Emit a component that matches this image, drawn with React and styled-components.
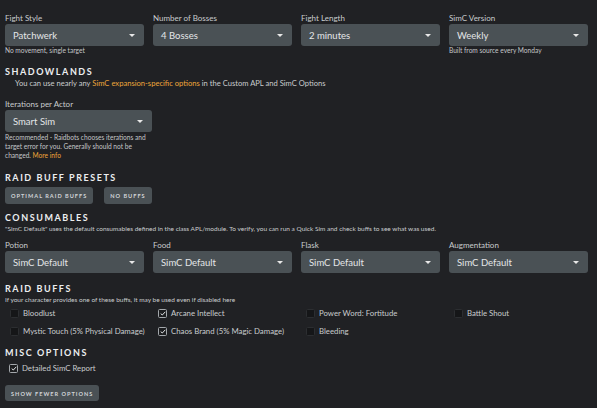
import styled, { createGlobalStyle } from "styled-components";

const GlobalStyle = createGlobalStyle`
  html, body {
    margin: 0;
    padding: 0;
    background: #202124;
  }
  body {
    font-family: Lato, "Noto Sans", sans-serif;
    color: #d4d6d8;
  }
`;

const Page = styled.div`
  width: 583px;
  padding: 13px 9px 8px 5px;
`;

const Grid = styled.div`
  display: grid;
  grid-template-columns: repeat(4, 139px);
  column-gap: 9px;
  margin-top: ${(p) => p.$mt || 0}px;
`;

const Field = styled.div`
  display: flex;
  flex-direction: column;
  width: ${(p) => (p.$w ? `${p.$w}px` : "auto")};
  margin-top: ${(p) => p.$mt || 0}px;
`;

const Label = styled.div`
  font-size: 8px;
  line-height: 10px;
  color: #c9ccce;
  margin-bottom: 1px;
`;

const SelectBox = styled.div`
  height: 22px;
  background: #4a5155;
  border-radius: 3px;
  display: flex;
  align-items: center;
  justify-content: space-between;
  padding: 0 9px 0 8px;
  font-size: 9.5px;
  color: #e4e6e8;
`;

const Arrow = styled.span`
  width: 0;
  height: 0;
  border-left: 3px solid transparent;
  border-right: 3px solid transparent;
  border-top: 3.5px solid #e8e8e8;
`;

const Help = styled.div`
  font-size: 6.6px;
  line-height: 9px;
  color: #c4c6c8;
  margin-top: ${(p) => p.$mt || 0}px;
`;

const Link = styled.span`
  color: #eea63a;
`;

const Heading = styled.div`
  font-size: 9px;
  line-height: 12px;
  font-weight: 700;
  letter-spacing: 1.55px;
  color: #eceef0;
  margin-top: ${(p) => p.$mt || 0}px;
`;

const Text = styled.div`
  font-size: ${(p) => p.$fs || 8}px;
  line-height: ${(p) => p.$lh || 10}px;
  color: #c9ccce;
  padding-left: ${(p) => p.$indent || 0}px;
  margin-top: ${(p) => p.$mt || 0}px;
  white-space: nowrap;
`;

const ButtonRow = styled.div`
  display: flex;
  gap: 11px;
  margin-top: ${(p) => p.$mt || 0}px;
`;

const Button = styled.button`
  height: ${(p) => p.$h || 17}px;
  padding: 0 ${(p) => p.$px || 6}px;
  background: #4a5155;
  border: none;
  border-radius: 3px;
  font-family: Lato, "Noto Sans", sans-serif;
  font-size: 5.6px;
  font-weight: 700;
  letter-spacing: 1px;
  color: #d2d5d8;
  cursor: pointer;
`;

const CheckGrid = styled.div`
  display: grid;
  grid-template-columns: repeat(4, 139px);
  column-gap: 9px;
  padding-left: ${(p) => p.$pl || 4}px;
`;

const CheckRow = styled.label`
  display: flex;
  align-items: center;
  gap: 4px;
  height: 18px;
  font-size: 7.8px;
  color: #c9ccce;
  white-space: nowrap;
`;

const Box = styled.span`
  box-sizing: border-box;
  width: 9px;
  height: 9px;
  border-radius: 1.5px;
  background: ${(p) => (p.$on ? "#1c1d1f" : "#151618")};
  border: 1px solid ${(p) => (p.$on ? "#a4a8ac" : "#2c2e31")};
  display: flex;
  align-items: center;
  justify-content: center;
  flex-shrink: 0;
`;

function Select({ label, value, help, width }) {
  return (
    <Field $w={width}>
      <Label>{label}</Label>
      <SelectBox>
        {value}
        <Arrow />
      </SelectBox>
      {help && <Help>{help}</Help>}
    </Field>
  );
}

function Check({ label, on }) {
  return (
    <CheckRow>
      <Box $on={on}>
        {on && (
          <svg width="6" height="5" viewBox="0 0 6 5">
            <path d="M0.7 2.6 L2.3 4 L5.3 0.8" fill="none" stroke="#e2e4e6" strokeWidth="1" />
          </svg>
        )}
      </Box>
      {label}
    </CheckRow>
  );
}

const raidBuffs = [
  { label: "Bloodlust", on: false },
  { label: "Arcane Intellect", on: true },
  { label: "Power Word: Fortitude", on: false },
  { label: "Battle Shout", on: false },
  { label: "Mystic Touch (5% Physical Damage)", on: false },
  { label: "Chaos Brand (5% Magic Damage)", on: true },
  { label: "Bleeding", on: false },
];

export default function App() {
  return (
    <Page>
      <GlobalStyle />
      <Grid>
        <Select label="Fight Style" value="Patchwerk" help="No movement, single target" />
        <Select label="Number of Bosses" value="4 Bosses" />
        <Select label="Fight Length" value="2 minutes" />
        <Select label="SimC Version" value="Weekly" help="Built from source every Monday" />
      </Grid>

      <Heading $mt={11}>SHADOWLANDS</Heading>
      <Text $indent={10} $fs={7.6}>
        You can use nearly any <Link>SimC expansion-specific options</Link> in the Custom APL and
        SimC Options
      </Text>

      <Field $w={147} $mt={11}>
        <Label>Iterations per Actor</Label>
        <SelectBox>
          Smart Sim
          <Arrow />
        </SelectBox>
        <Help $mt={1}>
          Recommended - Raidbots chooses iterations and target error for you. Generally should not
          be changed. <Link>More info</Link>
        </Help>
      </Field>

      <Heading $mt={12}>RAID BUFF PRESETS</Heading>
      <ButtonRow $mt={3}>
        <Button>OPTIMAL RAID BUFFS</Button>
        <Button>NO BUFFS</Button>
      </ButtonRow>

      <Heading $mt={8}>CONSUMABLES</Heading>
      <Text $fs={6.5}>
        "SimC Default" uses the default consumables defined in the class APL/module. To verify, you
        can run a Quick Sim and check buffs to see what was used.
      </Text>
      <Grid $mt={6}>
        <Select label="Potion" value="SimC Default" />
        <Select label="Food" value="SimC Default" />
        <Select label="Flask" value="SimC Default" />
        <Select label="Augmentation" value="SimC Default" />
      </Grid>

      <Heading $mt={10}>RAID BUFFS</Heading>
      <Text $fs={6.5} $lh={9}>
        If your character provides one of these buffs, it may be used even if disabled here
      </Text>
      <CheckGrid $pl={5}>
        {raidBuffs.map((b) => (
          <Check key={b.label} label={b.label} on={b.on} />
        ))}
      </CheckGrid>

      <Heading $mt={7}>MISC OPTIONS</Heading>
      <CheckGrid $pl={4}>
        <Check label="Detailed SimC Report" on />
      </CheckGrid>

      <ButtonRow $mt={8}>
        <Button $h={16} $px={6}>SHOW FEWER OPTIONS</Button>
      </ButtonRow>
    </Page>
  );
}
